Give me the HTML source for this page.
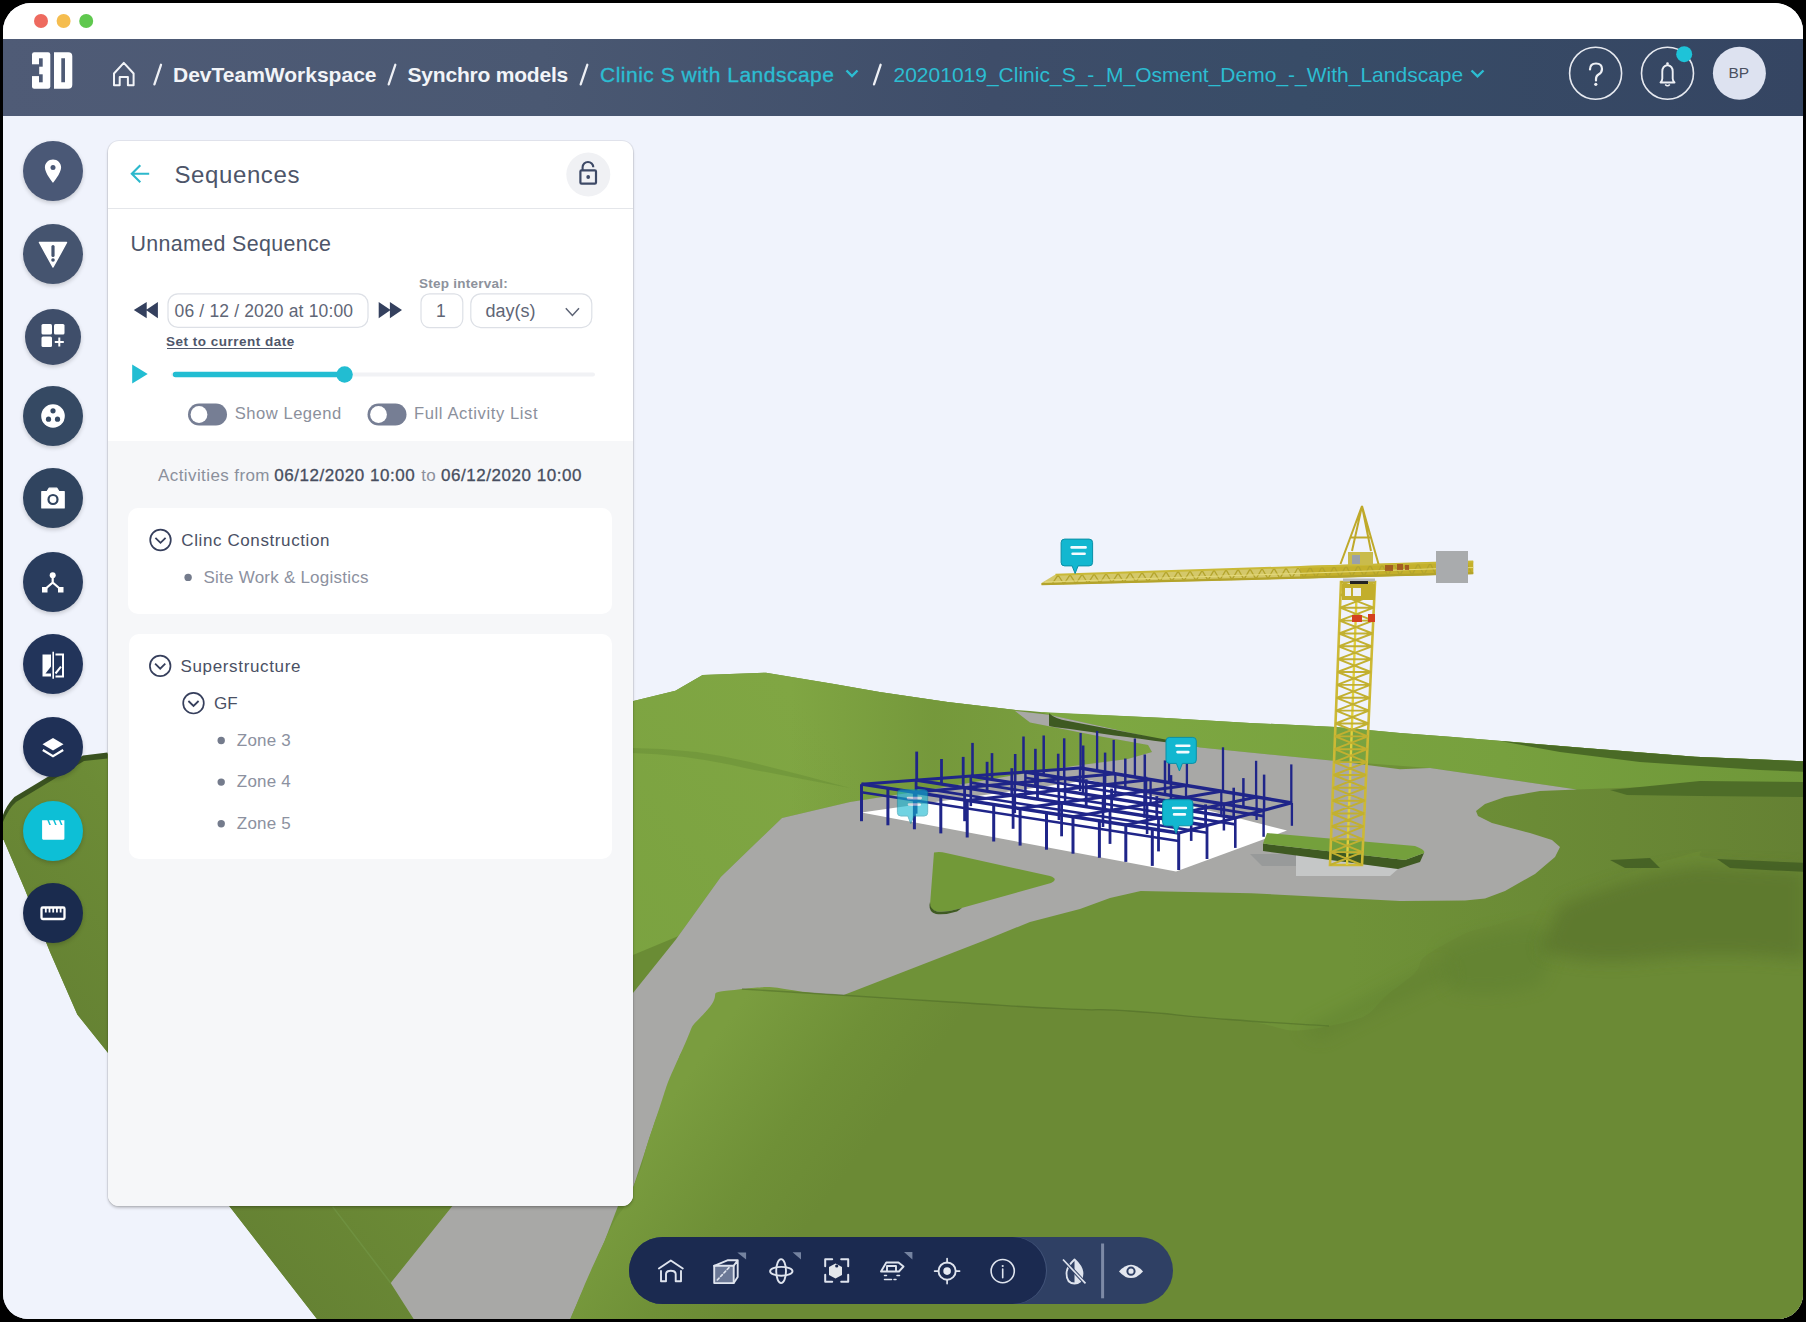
<!DOCTYPE html>
<html><head><meta charset="utf-8">
<style>
html,body{margin:0;padding:0;width:1806px;height:1322px;overflow:hidden;background:#000;}
*{box-sizing:border-box;}
.win{position:absolute;left:3px;top:3px;width:1800px;height:1316px;border-radius:28px 28px 25px 25px;overflow:hidden;background:#eef1f9;}
.in{position:absolute;left:-3px;top:-3px;width:1806px;height:1322px;font-family:"Liberation Sans",sans-serif;}
.abs{position:absolute;}
.t{position:absolute;white-space:pre;line-height:1;font-family:"Liberation Sans",sans-serif;}
.title{left:0;top:0;width:1806px;height:39px;background:#fff;}
.nav{left:0;top:39px;width:1806px;height:77px;background:linear-gradient(90deg,#4f5b76 0%,#4a5872 30%,#3e4d69 55%,#384c67 72%,#354562 100%);}
.btn{position:absolute;width:60px;height:60px;border-radius:50%;box-shadow:0 2px 4px rgba(0,0,0,0.18);}
.btn svg{position:absolute;left:0;top:0;}
.panel{left:108px;top:141px;width:525px;height:1065px;background:#fff;border-radius:11px;box-shadow:0 0 0 1px rgba(0,0,0,0.06),0 2px 3px rgba(0,0,0,0.22);overflow:hidden;}
.tb{left:629px;top:1237px;width:544px;height:67px;border-radius:34px;background:#2f4064;}
.tbd{left:629px;top:1237px;width:417px;height:67px;border-radius:34px;background:#1b2a50;}
</style></head>
<body>
<div class="win"><div class="in">

<!-- SCENE -->
<svg class="abs" style="left:0;top:0" width="1806" height="1322" viewBox="0 0 1806 1322">
<!--SC-->
<defs>
<linearGradient id="lh" gradientUnits="userSpaceOnUse" x1="800" y1="700" x2="150" y2="1250"><stop offset="0" stop-color="#80a643"/><stop offset="0.4" stop-color="#7aa240"/><stop offset="0.7" stop-color="#6c8b36"/><stop offset="1" stop-color="#627e32"/></linearGradient><linearGradient id="lhd" gradientUnits="userSpaceOnUse" x1="790" y1="0" x2="1150" y2="0"><stop offset="0" stop-color="#6f9137" stop-opacity="0"/><stop offset="0.4" stop-color="#6f9137" stop-opacity="0.65"/><stop offset="1" stop-color="#6f9137" stop-opacity="0.2"/></linearGradient>
<linearGradient id="fb" gradientUnits="userSpaceOnUse" x1="1050" y1="0" x2="1806" y2="0"><stop offset="0" stop-color="#7ea842"/><stop offset="0.6" stop-color="#77a03e"/><stop offset="1" stop-color="#6f9739"/></linearGradient>
<linearGradient id="fgg" gradientUnits="userSpaceOnUse" x1="750" y1="990" x2="900" y2="1100"><stop offset="0" stop-color="#7a9d3f"/><stop offset="0.6" stop-color="#6f9037"/><stop offset="1" stop-color="#6b8a35"/></linearGradient>
<filter id="bl8" x="-50%" y="-50%" width="200%" height="200%"><feGaussianBlur stdDeviation="8"/></filter>
<filter id="bl3" x="-50%" y="-50%" width="200%" height="200%"><feGaussianBlur stdDeviation="3"/></filter>
<linearGradient id="gb" gradientUnits="userSpaceOnUse" x1="1350" y1="0" x2="1806" y2="0"><stop offset="0" stop-color="#6f9238"/><stop offset="1" stop-color="#658133"/></linearGradient>
</defs>
<rect x="0" y="116" width="1806" height="1206" fill="#f0f3fc"/>
<path d="M3.7 840.0 L15.0 800.0 L50.0 777.4 L84.8 757.5 L107.3 753.7 L300.0 735.0 L500.0 712.0 L633.4 701.0 L675.4 690.8 L702.6 675.0 L766.0 672.7 L834.0 684.0 L879.6 692.0 L947.6 702.0 L1015.7 710.0 L1030.0 711.0 L1050.4 713.0 L1166.0 718.0 L1250.0 722.9 L1336.0 727.0 L1400.0 732.9 L1450.0 736.7 L1581.6 747.7 L1695.0 756.7 L1806.0 761.3 L1806.0 1322.0 L319.3 1322.0 L229.6 1206.6 L107.3 1052.0 L77.3 1014.5 L50.0 952.0 L25.0 889.7 L3.7 840.0Z" fill="url(#gb)"/>
<path d="M1040.0 712.0 L1166.0 718.0 L1250.0 722.9 L1336.0 727.0 L1400.0 732.9 L1450.0 736.7 L1581.6 747.7 L1695.0 756.7 L1806.0 761.3 L1806.0 790.0 L1700.0 785.0 L1577.0 789.6 L1430.0 768.0 L1336.0 761.0 L1200.0 747.6 L1166.0 740.8 L1049.0 714.7Z" fill="url(#fb)"/>
<path d="M1500 741 L1581.6 747.7 L1695 756.7 L1806 761.3 L1806 772 L1760 770 L1640 762 L1560 752Z" fill="#4a6a26"/>
<path d="M1610 790 L1700 781 L1806 782 L1806 797 L1700 796 L1627 795Z" fill="#4e6d28"/>
<path d="M0.0 823.0 L15.0 800.0 L50.0 777.4 L84.8 757.5 L107.3 753.7 L300.0 735.0 L500.0 712.0 L633.4 701.0 L675.4 690.8 L702.6 675.0 L766.0 672.7 L834.0 684.0 L879.6 692.0 L947.6 702.0 L1015.7 710.0 L1030.0 722.6 L1098.0 736.0 L1148.0 745.0 L1152.0 752.0 L1127.6 759.0 L1075.0 765.7 L1030.0 772.5 L940.0 788.0 L850.0 802.0 L782.0 818.0 L720.8 877.0 L675.5 940.0 L633.0 993.0 L452.0 1206.6 L390.7 1283.0 L415.6 1322.0 L319.3 1322.0 L229.6 1206.6 L107.3 1052.0 L77.3 1014.5 L50.0 952.0 L25.0 889.7 L3.7 840.0 L0.0 840.0Z" fill="url(#lh)"/>
<path d="M0.0 823.0 L15.0 800.0 L50.0 777.4 L84.8 757.5 L107.3 753.7 L300.0 735.0 L500.0 712.0 L633.4 701.0 L675.4 690.8 L702.6 675.0 L766.0 672.7 L834.0 684.0 L879.6 692.0 L947.6 702.0 L1015.7 710.0 L1030.0 722.6 L1098.0 736.0 L1148.0 745.0 L1152.0 752.0 L1127.6 759.0 L1075.0 765.7 L1030.0 772.5 L940.0 788.0 L850.0 802.0 L782.0 818.0 L720.8 877.0 L675.5 940.0 L633.0 993.0 L452.0 1206.6 L390.7 1283.0 L415.6 1322.0 L319.3 1322.0 L229.6 1206.6 L107.3 1052.0 L77.3 1014.5 L50.0 952.0 L25.0 889.7 L3.7 840.0 L0.0 840.0Z" fill="url(#lhd)"/>
<path d="M107.4 752.6 L83 755.6 L14.4 797 Q6 806 3 815 L3 822 Q9 808 16 802 L84 761 L107.4 758.5Z" fill="#3a5220"/>
<path d="M633 748 Q690 748 750 762 Q800 774 850 788 Q795 778 745 768 Q690 755 633 753Z" fill="#5f8430" opacity="0.35"/>
<path d="M633 955 L681 935 L633 993Z" fill="#6a8c35"/>
<path d="M1015.0 711.0 L1049.0 714.7 L1166.0 740.8 L1200.0 747.6 L1336.0 761.0 L1400.0 769.2 L1430.0 768.0 L1577.0 789.6 L1540.0 791.0 L1505.0 797.0 L1485.0 804.0 L1476.0 811.0 L1478.0 816.0 L1492.0 823.0 L1530.0 833.0 L1552.0 840.0 L1560.0 847.0 L1555.0 857.0 L1535.0 874.0 L1505.0 891.0 L1485.0 898.5 L1465.0 900.5 L1400.0 900.9 L1251.5 893.2 L1140.7 891.0 L1110.0 898.0 L1080.0 909.0 L1030.0 922.0 L985.6 940.0 L843.8 995.0 L742.0 989.0 L706.5 1011.0 L680.0 1055.0 L653.4 1126.0 L633.0 1188.0 L618.0 1206.0 L604.6 1241.0 L569.0 1322.0 L415.6 1322.0 L390.7 1283.0 L452.0 1206.6 L633.0 993.0 L675.5 940.0 L720.8 877.0 L782.0 818.0 L850.0 802.0 L940.0 788.0 L1030.0 772.5 L1075.0 765.7 L1127.6 759.0 L1152.0 752.0 L1148.0 745.0 L1098.0 736.0 L1030.0 722.6Z" fill="#a8a8a6"/>
<path d="M1049 713.3 Q1055 719 1068 721 Q1120 731 1168 740 L1168 742.5 Q1110 735 1070 729 Q1052 727 1049 725.7Z" fill="#3e5a22"/>
<path d="M569 1322 C580.9 1295.0 583.3 1285.7 604.6 1241.0 C625.9 1196.3 616.7 1226.3 633.0 1188.0 C649.3 1149.7 637.7 1170.3 653.4 1126.0 C669.1 1081.7 662.3 1093.3 680.0 1055.0 C697.7 1016.7 685.8 1033.0 706.5 1011.0 C727.2 989.0 697.8 994.3 742.0 989.0 C786.2 983.7 769.7 990.7 839.0 995.0 C908.3 999.3 876.0 997.4 950.0 1002.0 C1024.0 1006.6 1001.0 1005.7 1061.0 1008.7 C1121.0 1011.7 1074.0 1007.4 1130.0 1011.0 C1186.0 1014.6 1162.7 1014.5 1229.0 1019.5 C1295.3 1024.5 1272.0 1037.5 1329.0 1026.0 C1386.0 1014.5 1361.3 1012.3 1400.0 985.0 C1438.7 957.7 1399.7 968.7 1445.0 944.0 C1490.3 919.3 1460.3 939.3 1536.0 911.0 C1611.7 882.7 1611.4 876.3 1672.0 859.0 C1732.6 841.7 1673.0 857.7 1717.7 859.0 C1762.4 860.3 1776.6 861.7 1806.0 863.0 L1806 1322Z" fill="url(#fgg)"/>
<path d="M742 989 C774.3 991.0 769.7 990.7 839.0 995.0 C908.3 999.3 876.0 997.4 950.0 1002.0 C1024.0 1006.6 1001.0 1005.7 1061.0 1008.7 C1121.0 1011.7 1074.0 1007.4 1130.0 1011.0 C1186.0 1014.6 1162.7 1014.5 1229.0 1019.5 C1295.3 1024.5 1295.7 1023.8 1329.0 1026.0" fill="none" stroke="#4a6626" stroke-width="1.3" opacity="0.5"/>
<path d="M1440 950 Q1480 930 1540 925 Q1560 950 1540 985 Q1490 1000 1450 990Z" fill="#587a2d" opacity="0.35" filter="url(#bl8)"/>
<path d="M1300 1030 Q1360 1000 1440 960 L1455 975 Q1380 1010 1320 1040Z" fill="#5b7d2f" opacity="0.4" filter="url(#bl8)"/>
<path d="M1560 905 Q1640 872 1700 866 L1806 870 L1806 960 Q1720 950 1640 960 Q1580 965 1540 950Z" fill="#566f2c" opacity="0.6" filter="url(#bl8)"/>
<path d="M1717 859 L1806 863 L1806 872 L1730 868Z" fill="#3f5a22" opacity="0.8"/>
<path d="M1610 860 L1650 858 L1660 868 L1625 868Z" fill="#3f5a22" opacity="0.8"/>
<path d="M332.6 1206.6 L390.7 1283" stroke="#6f9140" stroke-width="1.5"/>
<path d="M934 852.5 Q940 851.5 946 853 L1050 876 Q1059 879 1051 883 L958 909 Q947 912.5 937 911.5 Q930 910 930 905Z" fill="#729938"/>
<path d="M930 902 Q930 910 937 911.5 Q947 912.5 958 909 L962 908 L957 911.5 Q946 915 936 914 Q929 912 929.5 905Z" fill="#3f5a22"/>
<path d="M861.5 812.5 L1176 871.5 L1287 830.6 L1090 780Z" fill="#ffffff"/>
<path d="M1250 854 L1302 854 L1300 866 L1262 866Z" fill="#989a9a"/>
<path d="M1296 854 L1398 869 L1390 876 L1296 876Z" fill="#c5c7c7"/>
<path d="M1263 843.6 L1405 860 L1424 853 L1420 862 L1398 869 L1263 851Z" fill="#3f5a22"/>
<path d="M1267 833 L1415 846 Q1426 850 1424 853 L1405 860 L1263 843.6Z" fill="#74a03c"/>
<g stroke-linecap="butt"><path d="M1080.0 768.0 V791.0" stroke="#1f2589" stroke-width="2.3"/><path d="M1080.6 768.0 V733.0" stroke="#1f2589" stroke-width="2.3"/><path d="M1097.1 770.9 V730.9" stroke="#1f2589" stroke-width="2.3"/><path d="M1025.4 772.0 V798.5" stroke="#1f2589" stroke-width="2.5"/><path d="M1023.5 772.0 V736.5" stroke="#1f2589" stroke-width="2.5"/><path d="M1115.3 773.8 V796.8" stroke="#1f2589" stroke-width="2.3"/><path d="M1113.7 773.8 V739.9" stroke="#1f2589" stroke-width="2.3"/><path d="M1043.7 775.2 V735.5" stroke="#1f2589" stroke-width="2.5"/><path d="M970.8 776.1 V806.1" stroke="#1f2589" stroke-width="2.6"/><path d="M972.5 776.1 V742.9" stroke="#1f2589" stroke-width="2.6"/><path d="M1134.9 776.7 V738.5" stroke="#1f2589" stroke-width="2.3"/><path d="M1065.1 778.4 V804.9" stroke="#1f2589" stroke-width="2.5"/><path d="M1064.2 778.4 V738.3" stroke="#1f2589" stroke-width="2.5"/><path d="M992.0 779.6 V753.1" stroke="#1f2589" stroke-width="2.6"/><path d="M1150.6 779.6 V802.6" stroke="#1f2589" stroke-width="2.3"/><path d="M916.1 780.2 V813.7" stroke="#1f2589" stroke-width="2.8"/><path d="M916.7 780.2 V751.6" stroke="#1f2589" stroke-width="2.8"/><path d="M1083.2 781.6 V745.5" stroke="#1f2589" stroke-width="2.5"/><path d="M1169.0 782.5 V746.8" stroke="#1f2589" stroke-width="2.3"/><path d="M1014.8 783.1 V813.1" stroke="#1f2589" stroke-width="2.6"/><path d="M1015.2 783.1 V754.0" stroke="#1f2589" stroke-width="2.6"/><path d="M941.5 783.9 V759.0" stroke="#1f2589" stroke-width="2.8"/><path d="M861.5 784.2 V821.2" stroke="#1f2589" stroke-width="3.0"/><path d="M1104.8 784.8 V811.3" stroke="#1f2589" stroke-width="2.5"/><path d="M1105.1 784.8 V752.6" stroke="#1f2589" stroke-width="2.5"/><path d="M1186.0 785.4 V808.4" stroke="#1f2589" stroke-width="2.3"/><path d="M1186.9 785.4 V741.0" stroke="#1f2589" stroke-width="2.3"/><path d="M1035.4 786.5 V748.8" stroke="#1f2589" stroke-width="2.6"/><path d="M964.6 787.7 V821.2" stroke="#1f2589" stroke-width="2.8"/><path d="M963.2 787.7 V756.9" stroke="#1f2589" stroke-width="2.8"/><path d="M1125.3 788.0 V758.5" stroke="#1f2589" stroke-width="2.5"/><path d="M887.9 788.3 V825.3" stroke="#1f2589" stroke-width="3.0"/><path d="M1058.9 790.0 V820.0" stroke="#1f2589" stroke-width="2.6"/><path d="M1058.2 790.0 V753.7" stroke="#1f2589" stroke-width="2.6"/><path d="M1144.5 791.2 V817.7" stroke="#1f2589" stroke-width="2.5"/><path d="M1144.8 791.2 V754.5" stroke="#1f2589" stroke-width="2.5"/><path d="M1221.3 791.2 V814.2" stroke="#1f2589" stroke-width="2.3"/><path d="M1223.0 791.2 V747.3" stroke="#1f2589" stroke-width="2.3"/><path d="M987.1 791.5 V761.8" stroke="#1f2589" stroke-width="2.8"/><path d="M914.4 792.3 V829.3" stroke="#1f2589" stroke-width="3.0"/><path d="M1083.0 793.5 V760.1" stroke="#1f2589" stroke-width="2.6"/><path d="M1165.0 794.4 V760.4" stroke="#1f2589" stroke-width="2.5"/><path d="M1013.1 795.3 V828.8" stroke="#1f2589" stroke-width="2.8"/><path d="M1011.8 795.3 V768.2" stroke="#1f2589" stroke-width="2.8"/><path d="M940.8 796.4 V833.4" stroke="#1f2589" stroke-width="3.0"/><path d="M1103.0 797.0 V827.0" stroke="#1f2589" stroke-width="2.6"/><path d="M1104.1 797.0 V771.2" stroke="#1f2589" stroke-width="2.6"/><path d="M1256.6 797.0 V820.0" stroke="#1f2589" stroke-width="2.3"/><path d="M1256.1 797.0 V760.8" stroke="#1f2589" stroke-width="2.3"/><path d="M1184.2 797.6 V824.1" stroke="#1f2589" stroke-width="2.5"/><path d="M1037.5 799.0 V772.2" stroke="#1f2589" stroke-width="2.8"/><path d="M967.2 800.5 V837.5" stroke="#1f2589" stroke-width="3.0"/><path d="M1291.9 802.8 V825.8" stroke="#1f2589" stroke-width="2.3"/><path d="M1291.3 802.8 V764.4" stroke="#1f2589" stroke-width="2.3"/><path d="M1061.6 802.8 V836.3" stroke="#1f2589" stroke-width="2.8"/><path d="M1223.9 804.0 V830.5" stroke="#1f2589" stroke-width="2.5"/><path d="M1147.1 804.0 V834.0" stroke="#1f2589" stroke-width="2.6"/><path d="M1146.0 804.0 V776.7" stroke="#1f2589" stroke-width="2.6"/><path d="M993.7 804.5 V841.5" stroke="#1f2589" stroke-width="3.0"/><path d="M1086.2 806.6 V779.3" stroke="#1f2589" stroke-width="2.8"/><path d="M1243.4 807.2 V778.1" stroke="#1f2589" stroke-width="2.5"/><path d="M1171.0 807.5 V775.1" stroke="#1f2589" stroke-width="2.6"/><path d="M1020.1 808.6 V845.6" stroke="#1f2589" stroke-width="3.0"/><path d="M1263.6 810.3 V836.8" stroke="#1f2589" stroke-width="2.5"/><path d="M1264.1 810.3 V774.6" stroke="#1f2589" stroke-width="2.5"/><path d="M1110.0 810.4 V843.9" stroke="#1f2589" stroke-width="2.8"/><path d="M1111.6 810.4 V788.6" stroke="#1f2589" stroke-width="2.8"/><path d="M1191.2 810.9 V840.9" stroke="#1f2589" stroke-width="2.6"/><path d="M1046.5 812.7 V849.7" stroke="#1f2589" stroke-width="3.0"/><path d="M1073.0 816.7 V853.7" stroke="#1f2589" stroke-width="3.0"/><path d="M1235.3 817.9 V847.9" stroke="#1f2589" stroke-width="2.6"/><path d="M1233.7 817.9 V787.7" stroke="#1f2589" stroke-width="2.6"/><path d="M1158.5 817.9 V851.4" stroke="#1f2589" stroke-width="2.8"/><path d="M1156.8 817.9 V796.1" stroke="#1f2589" stroke-width="2.8"/><path d="M1099.4 820.8 V857.8" stroke="#1f2589" stroke-width="3.0"/><path d="M1182.1 821.7 V798.6" stroke="#1f2589" stroke-width="2.8"/><path d="M1125.8 824.9 V861.9" stroke="#1f2589" stroke-width="3.0"/><path d="M1207.0 825.5 V859.0" stroke="#1f2589" stroke-width="2.8"/><path d="M1205.6 825.5 V804.4" stroke="#1f2589" stroke-width="2.8"/><path d="M1152.3 828.9 V865.9" stroke="#1f2589" stroke-width="3.0"/><path d="M1178.7 833.0 V870.0" stroke="#1f2589" stroke-width="3.0"/><path d="M861.5 784.2 L1178.7 833.0" stroke="#1f2589" stroke-width="3.3"/><path d="M861.5 792.2 L1178.7 841.0" stroke="#1f2589" stroke-width="2.6"/><path d="M916.1 780.2 L1207.0 825.5" stroke="#1f2589" stroke-width="3.3"/><path d="M916.1 787.4 L1207.0 832.7" stroke="#1f2589" stroke-width="2.6"/><path d="M970.8 776.1 L1235.3 817.9" stroke="#1f2589" stroke-width="3.3"/><path d="M970.8 782.6 L1235.3 824.4" stroke="#1f2589" stroke-width="2.6"/><path d="M1025.4 772.0 L1263.6 810.3" stroke="#1f2589" stroke-width="3.3"/><path d="M1025.4 777.8 L1263.6 816.1" stroke="#1f2589" stroke-width="2.6"/><path d="M1080.0 768.0 L1291.9 802.8" stroke="#1f2589" stroke-width="3.3"/><path d="M861.5 784.2 L1080.0 768.0" stroke="#1f2589" stroke-width="3"/><path d="M914.4 792.3 L1115.3 773.8" stroke="#1f2589" stroke-width="3"/><path d="M967.2 800.5 L1150.6 779.6" stroke="#1f2589" stroke-width="3"/><path d="M1020.1 808.6 L1186.0 785.4" stroke="#1f2589" stroke-width="3"/><path d="M1073.0 816.7 L1221.3 791.2" stroke="#1f2589" stroke-width="3"/><path d="M1125.8 824.9 L1256.6 797.0" stroke="#1f2589" stroke-width="3"/><path d="M1178.7 833.0 L1291.9 802.8" stroke="#1f2589" stroke-width="3"/></g>
<path d="M1341 582 L1375 582 L1362 865 L1330 865Z" fill="none" stroke="#cdb935" stroke-width="2.6"/>
<path d="M1357 582 L1347 865" stroke="#e0cf3c" stroke-width="2.4"/>
<path d="M1341.0 582.0 L1374.4 594.9 M1375.0 582.0 L1340.5 594.9 M1341.0 582.0 L1375.0 582.0 M1340.5 594.9 L1373.8 607.7 M1374.4 594.9 L1340.0 607.7 M1340.5 594.9 L1374.4 594.9 M1340.0 607.7 L1373.2 620.6 M1373.8 607.7 L1339.5 620.6 M1340.0 607.7 L1373.8 607.7 M1339.5 620.6 L1372.6 633.5 M1373.2 620.6 L1339.0 633.5 M1339.5 620.6 L1373.2 620.6 M1339.0 633.5 L1372.0 646.3 M1372.6 633.5 L1338.5 646.3 M1339.0 633.5 L1372.6 633.5 M1338.5 646.3 L1371.5 659.2 M1372.0 646.3 L1338.0 659.2 M1338.5 646.3 L1372.0 646.3 M1338.0 659.2 L1370.9 672.0 M1371.5 659.2 L1337.5 672.0 M1338.0 659.2 L1371.5 659.2 M1337.5 672.0 L1370.3 684.9 M1370.9 672.0 L1337.0 684.9 M1337.5 672.0 L1370.9 672.0 M1337.0 684.9 L1369.7 697.8 M1370.3 684.9 L1336.5 697.8 M1337.0 684.9 L1370.3 684.9 M1336.5 697.8 L1369.1 710.6 M1369.7 697.8 L1336.0 710.6 M1336.5 697.8 L1369.7 697.8 M1336.0 710.6 L1368.5 723.5 M1369.1 710.6 L1335.5 723.5 M1336.0 710.6 L1369.1 710.6 M1335.5 723.5 L1367.9 736.4 M1368.5 723.5 L1335.0 736.4 M1335.5 723.5 L1368.5 723.5 M1335.0 736.4 L1367.3 749.2 M1367.9 736.4 L1334.5 749.2 M1335.0 736.4 L1367.9 736.4 M1334.5 749.2 L1366.7 762.1 M1367.3 749.2 L1334.0 762.1 M1334.5 749.2 L1367.3 749.2 M1334.0 762.1 L1366.1 775.0 M1366.7 762.1 L1333.5 775.0 M1334.0 762.1 L1366.7 762.1 M1333.5 775.0 L1365.5 787.8 M1366.1 775.0 L1333.0 787.8 M1333.5 775.0 L1366.1 775.0 M1333.0 787.8 L1365.0 800.7 M1365.5 787.8 L1332.5 800.7 M1333.0 787.8 L1365.5 787.8 M1332.5 800.7 L1364.4 813.5 M1365.0 800.7 L1332.0 813.5 M1332.5 800.7 L1365.0 800.7 M1332.0 813.5 L1363.8 826.4 M1364.4 813.5 L1331.5 826.4 M1332.0 813.5 L1364.4 813.5 M1331.5 826.4 L1363.2 839.3 M1363.8 826.4 L1331.0 839.3 M1331.5 826.4 L1363.8 826.4 M1331.0 839.3 L1362.6 852.1 M1363.2 839.3 L1330.5 852.1 M1331.0 839.3 L1363.2 839.3 M1330.5 852.1 L1362.0 865.0 M1362.6 852.1 L1330.0 865.0 M1330.5 852.1 L1362.6 852.1" stroke="#c2b030" stroke-width="1.9" fill="none"/>
<path d="M1352 615 h10 v7 h-10z M1368 614 h7 v8 h-7z" fill="#d5401f"/>
<path d="M1041.5 582.9 L1055.5 574.6 L1473.2 561.2 L1473.2 574 L1041.5 585Z" fill="#cdbd45" opacity="0.8"/>
<path d="M1300 566 L1473.2 561.2 L1473.2 574 L1300 578.5Z" fill="#c4b02c"/>
<path d="M1052.0 584.2 L1058.0 575.2 M1058.0 575.0 L1064.0 584.1 M1064.0 583.9 L1070.0 574.8 M1070.0 574.6 L1076.0 583.8 M1076.0 583.6 L1082.0 574.4 M1082.0 574.2 L1088.0 583.5 M1088.0 583.3 L1094.0 574.1 M1094.0 573.9 L1100.0 583.2 M1100.0 583.0 L1106.0 573.7 M1106.0 573.5 L1112.0 582.9 M1112.0 582.7 L1118.0 573.3 M1118.0 573.1 L1124.0 582.6 M1124.0 582.4 L1130.0 572.9 M1130.0 572.7 L1136.0 582.2 M1136.0 582.1 L1142.0 572.5 M1142.0 572.3 L1148.0 581.9 M1148.0 581.8 L1154.0 572.1 M1154.0 571.9 L1160.0 581.6 M1160.0 581.5 L1166.0 571.7 M1166.0 571.6 L1172.0 581.3 M1172.0 581.2 L1178.0 571.4 M1178.0 571.2 L1184.0 581.0 M1184.0 580.9 L1190.0 571.0 M1190.0 570.8 L1196.0 580.7 M1196.0 580.6 L1202.0 570.6 M1202.0 570.4 L1208.0 580.4 M1208.0 580.3 L1214.0 570.2 M1214.0 570.0 L1220.0 580.1 M1220.0 580.0 L1226.0 569.8 M1226.0 569.6 L1232.0 579.8 M1232.0 579.6 L1238.0 569.4 M1238.0 569.2 L1244.0 579.5 M1244.0 579.3 L1250.0 569.1 M1250.0 568.9 L1256.0 579.2 M1256.0 579.0 L1262.0 568.7 M1262.0 568.5 L1268.0 578.9 M1268.0 578.7 L1274.0 568.3 M1274.0 568.1 L1280.0 578.6 M1280.0 578.4 L1286.0 567.9 M1286.0 567.7 L1292.0 578.3 M1292.0 578.1 L1298.0 567.5 M1298.0 567.3 L1304.0 578.0 M1304.0 577.8 L1310.0 567.1 M1310.0 566.9 L1316.0 577.7 M1316.0 577.5 L1322.0 566.7 M1322.0 566.6 L1328.0 577.4 M1328.0 577.2 L1334.0 566.4 M1334.0 566.2 L1340.0 577.0 M1340.0 576.9 L1346.0 566.0 M1346.0 565.8 L1352.0 576.7 M1352.0 576.6 L1358.0 565.6 M1358.0 565.4 L1364.0 576.4 M1364.0 576.3 L1370.0 565.2 M1370.0 565.0 L1376.0 576.1 M1376.0 576.0 L1382.0 564.8 M1382.0 564.6 L1388.0 575.8 M1388.0 575.7 L1394.0 564.4 M1394.0 564.2 L1400.0 575.5 M1400.0 575.4 L1406.0 564.0 M1406.0 563.9 L1412.0 575.2 M1412.0 575.1 L1418.0 563.7 M1418.0 563.5 L1424.0 574.9 M1424.0 574.8 L1430.0 563.3 M1430.0 563.1 L1436.0 574.6 M1436.0 574.4 L1442.0 562.9 M1442.0 562.7 L1448.0 574.3 M1448.0 574.1 L1454.0 562.5 M1454.0 562.3 L1460.0 574.0 M1460.0 573.8 L1466.0 562.1 M1466.0 561.9 L1472.0 573.7" stroke="#b3a42c" stroke-width="1.3" fill="none"/>
<path d="M1055.5 574.8 L1473.2 561.4" stroke="#c9b937" stroke-width="2"/>
<path d="M1041.5 584.2 L1473.2 573.2" stroke="#b3a32b" stroke-width="2.2"/>
<path d="M1045 582 L1473.2 567.5" stroke="#e5da7a" stroke-width="1"/>
<rect x="1436" y="551" width="32" height="32" fill="#a9abad"/>
<path d="M1343 578.5 h32 v3 h-32z" fill="#b8babb"/><path d="M1350 581 h18 v3 h-18z" fill="#222"/><path d="M1342 584 h33 v16 h-33z" fill="#c2ae2c"/><path d="M1345 588 h6 v8 h-6z M1353 588 h8 v8 h-8z" fill="#eef0f0"/>
<path d="M1362 506 L1340.5 564 M1362 506 L1378.5 564 M1362 506 L1352 551 M1362 506 L1371 551 M1350 537.5 h21" stroke="#bfa92a" stroke-width="2" fill="none"/>
<path d="M1385 565 h8 v6 h-8z M1397 564 h6 v6 h-6z M1405 565 h4 v5 h-4z" fill="#9c4a1e" opacity="0.8"/>
<path d="M1348 552 h25 v13 h-25z" fill="#c9bb4c"/><path d="M1352 555 h8 v9 h-8z" fill="#9aa0a8"/>
<g opacity="1.00"><path d="M1068.1 539.1 h21.0 q3.5 0 3.5 3.5 v19.8 q0 3.5 -3.5 3.5 h-11.0 l-3 7.6 l-3 -7.6 h-7.5 q-3.5 0 -3.5 -3.5 v-19.8 q0 -3.5 3.5 -3.5z" fill="#12b7d0" stroke="#0b8fa6" stroke-width="1"/><path d="M1071.6 547.4 h14.0 M1072.6 553.8 h12.0" stroke="#f4fbff" stroke-width="2.6" stroke-linecap="round"/></g>
<g opacity="1.00"><path d="M1173.0 737.4 h19.8 q3.5 0 3.5 3.5 v19.0 q0 3.5 -3.5 3.5 h-10.4 l-3 7.6 l-3 -7.6 h-6.9 q-3.5 0 -3.5 -3.5 v-19.0 q0 -3.5 3.5 -3.5z" fill="#12b7d0" stroke="#0b8fa6" stroke-width="1"/><path d="M1176.5 745.7 h12.8 M1177.5 752.1 h10.8" stroke="#f4fbff" stroke-width="2.6" stroke-linecap="round"/></g>
<g opacity="1.00"><path d="M1169.6 799.7 h19.8 q3.5 0 3.5 3.5 v19.1 q0 3.5 -3.5 3.5 h-10.4 l-3 7.6 l-3 -7.6 h-6.9 q-3.5 0 -3.5 -3.5 v-19.1 q0 -3.5 3.5 -3.5z" fill="#12b7d0" stroke="#0b8fa6" stroke-width="1"/><path d="M1173.1 808.0 h12.8 M1174.1 814.4 h10.8" stroke="#f4fbff" stroke-width="2.6" stroke-linecap="round"/></g>
<g opacity="0.60"><path d="M904.5 789.8 h19.7 q3.5 0 3.5 3.5 v19.2 q0 3.5 -3.5 3.5 h-10.4 l-3 7.6 l-3 -7.6 h-6.9 q-3.5 0 -3.5 -3.5 v-19.2 q0 -3.5 3.5 -3.5z" fill="#12b7d0" stroke="#0b8fa6" stroke-width="1"/><path d="M908.0 798.1 h12.7 M909.0 804.5 h10.7" stroke="#f4fbff" stroke-width="2.6" stroke-linecap="round"/></g>
<!--/SC-->
</svg>

<!-- title bar -->
<div class="abs title"></div>
<svg class="abs" style="left:0;top:0" width="120" height="39">
<circle cx="41" cy="21" r="7" fill="#ee6a5f"/>
<circle cx="63.6" cy="21" r="7" fill="#f5bd4f"/>
<circle cx="86.2" cy="21" r="7" fill="#5fc84e"/>
</svg>

<!-- nav -->
<div class="abs nav"></div>
<svg class="abs" style="left:0;top:39px" width="200" height="77" viewBox="0 39 200 77">
<rect x="32" y="52.3" width="18.3" height="36.4" rx="2.2" fill="#fff"/>
<rect x="31" y="64.3" width="8.2" height="11.8" fill="#4e5a75"/>
<rect x="39" y="58.3" width="3.7" height="8.4" fill="#4e5a75"/>
<rect x="39" y="74.3" width="3.7" height="8" fill="#4e5a75"/>
<path fill="#fff" fill-rule="evenodd" d="M54 52.3h14.3q4 0 4 4v28.4q0 4-4 4H54z M61.3 58.3v24h3.7v-24z"/>
<path fill="none" stroke="#f2f4f8" stroke-width="2" stroke-linejoin="round" d="M114 73.5l9.8-10.6l9.8 10.6v11.7h-5.7v-8.2h-8.2v8.2H114z"/>
</svg>
<svg class="abs" style="left:0;top:39px" width="1806" height="77" viewBox="0 39 1806 77"><path d="M154.4 84.3L161.0 64.8" stroke="#eef0f5" stroke-width="2.3" stroke-linecap="round"/><path d="M388.7 84.3L395.3 64.8" stroke="#eef0f5" stroke-width="2.3" stroke-linecap="round"/><path d="M580.7 84.3L587.3 64.8" stroke="#eef0f5" stroke-width="2.3" stroke-linecap="round"/><path d="M874.0 84.3L880.6 64.8" stroke="#eef0f5" stroke-width="2.3" stroke-linecap="round"/></svg>
<div class="t" style="left:173px;top:63.7px;font-size:21px;font-weight:bold;color:#f2f4f8;">DevTeamWorkspace</div>
<div class="t" style="left:407.5px;top:63.7px;font-size:21px;font-weight:bold;color:#f2f4f8;letter-spacing:-0.2px">Synchro models</div>
<div class="t" style="left:600px;top:63.7px;font-size:21px;color:#2cbdd2;letter-spacing:0.5px;-webkit-text-stroke:0.35px #2cbdd2">Clinic S with Landscape</div>
<svg class="abs" style="left:840px;top:60px" width="25" height="25"><path d="M6.5 10.5l5.5 5.5l5.5-5.5" fill="none" stroke="#2cbdd2" stroke-width="2.4"/></svg>
<div class="t" style="left:893.5px;top:63.7px;font-size:21px;color:#2cbdd2;">20201019_Clinic_S_-_M_Osment_Demo_-_With_Landscape</div>
<svg class="abs" style="left:1466px;top:60px" width="25" height="25"><path d="M5.5 10.5l6 5.8l6-5.8" fill="none" stroke="#2cbdd2" stroke-width="2.4"/></svg>

<svg class="abs" style="left:1560px;top:39px" width="246" height="77" viewBox="1560 39 246 77">
<circle cx="1595.6" cy="73.2" r="26" fill="none" stroke="#e6e9f0" stroke-width="1.6"/>
<path d="M1590 69.5q0-6 6-6q6 0 6 5.5q0 3.5-3.5 5.5q-2.5 1.5-2.5 4.5v1.5" fill="none" stroke="#eef0f5" stroke-width="2.2" stroke-linecap="round"/>
<circle cx="1595.8" cy="84.3" r="1.6" fill="#eef0f5"/>
<circle cx="1667.5" cy="73.2" r="26" fill="none" stroke="#e6e9f0" stroke-width="1.6"/>
<path d="M1660.5 82.5h14q-1.8-1.5-1.8-4v-7q0-5.5-5.2-6.5q-5.2 1-5.2 6.5v7q0 2.5-1.8 4z" fill="none" stroke="#eef0f5" stroke-width="1.9" stroke-linejoin="round"/>
<path d="M1665.2 84.5q2.3 2.5 4.6 0" fill="none" stroke="#eef0f5" stroke-width="1.6"/>
<circle cx="1667.5" cy="63.5" r="1.3" fill="#eef0f5"/>
<circle cx="1684.2" cy="54.2" r="8" fill="#1ec3d8"/>
<circle cx="1739.4" cy="73.2" r="26.5" fill="#dde2f0"/>
</svg>
<div class="t" style="left:1728.5px;top:65px;font-size:15.5px;color:#4a5060;">BP</div>

<!-- sidebar -->
<div class="btn" style="left:22.6px;top:141.2px;background:#4a5876"><svg width="60" height="60"><path d="M30 18.4c-4.5 0-8.1 3.5-8.1 8c0 5.8 8.1 15.4 8.1 15.4s8.1-9.6 8.1-15.4c0-4.5-3.6-8-8.1-8z" fill="#fff"/><circle cx="30" cy="26.6" r="2.5" fill="#4a5876"/></svg></div>
<div class="btn" style="left:22.6px;top:224px;background:#45546f"><svg width="60" height="60"><path d="M16.5 18.5h27l-13.5 24.5z" fill="#fff" stroke="#fff" stroke-width="1.5" stroke-linejoin="round"/><path d="M30 22.5v9" stroke="#45546f" stroke-width="3.2" stroke-linecap="round"/><circle cx="30" cy="36" r="1.8" fill="#45546f"/></svg></div>
<div class="btn" style="left:24.6px;top:308.5px;width:56px;height:56px;background:#3f4e6a"><svg width="56" height="56"><rect x="16.5" y="15" width="10.5" height="10.5" rx="1.5" fill="#fff"/><rect x="29" y="15" width="10.5" height="10.5" rx="1.5" fill="#fff"/><rect x="16.5" y="27.5" width="10.5" height="10.5" rx="1.5" fill="#fff"/><path d="M34.3 28.5v9M29.8 33h9" stroke="#fff" stroke-width="2"/></svg></div>
<div class="btn" style="left:22.6px;top:386.4px;background:#354963"><svg width="60" height="60"><circle cx="30" cy="30" r="11.8" fill="#fff"/><circle cx="30" cy="24.8" r="2.6" fill="#354963"/><circle cx="25.5" cy="33.2" r="2.6" fill="#354963"/><circle cx="34.5" cy="33.2" r="2.6" fill="#354963"/></svg></div>
<div class="btn" style="left:22.6px;top:468.2px;background:#30445f"><svg width="60" height="60"><path d="M18.8 23.5h5.2l2.2-3.3h7.6l2.2 3.3h5.2v16.5H18.8z" fill="#fff" stroke="#fff" stroke-linejoin="round" stroke-width="1.2"/><circle cx="30" cy="31.5" r="4.5" fill="none" stroke="#30445f" stroke-width="2.2"/></svg></div>
<div class="btn" style="left:22.6px;top:551.5px;background:#293c5d"><svg width="60" height="60"><circle cx="29.7" cy="23.2" r="3" fill="#fff"/><path d="M29.7 24v6.5l-7.5 6.5M29.7 30.5l7.5 6.5" stroke="#fff" stroke-width="2.2" fill="none"/><rect x="19" y="35" width="5.5" height="5.5" fill="#fff"/><rect x="35" y="35" width="5.5" height="5.5" fill="#fff"/></svg></div>
<div class="btn" style="left:22.6px;top:634px;background:#22345a"><svg width="60" height="60"><path d="M19.5 20.5h8.5v22h-8.5z" fill="#fff"/><path d="M28 32.5l-5.5 7h5.5z" fill="#22345a"/><path d="M30.2 17.8v27" stroke="#fff" stroke-width="1.6"/><path d="M32.5 20.5h7.5v22h-7.5" fill="none" stroke="#fff" stroke-width="2"/><path d="M32.5 39.5l5.5-6.8" stroke="#fff" stroke-width="2"/></svg></div>
<div class="btn" style="left:22.6px;top:716.5px;background:#1f3056"><svg width="60" height="60"><path d="M30 21l10.5 6.3l-10.5 6.3l-10.5-6.3z" fill="#fff"/><path d="M19.8 33l10.2 6.2l10.2-6.2" fill="none" stroke="#fff" stroke-width="2.2"/></svg></div>
<div class="btn" style="left:22.6px;top:800.9px;background:#0dbfd6"><svg width="60" height="60"><path d="M19.1 24.1H41.4V37.6Q41.4 38.7 40.3 38.7H20.2Q19.1 38.7 19.1 37.6Z M19.1 19.3H24.3L26.3 24.1H19.1Z M25.9 19.3H30.1L32.1 24.1H27.9Z M31.7 19.3H35.9L37.9 24.1H33.7Z M37.5 19.3H41.4V24.1H39.5Z" fill="#fff"/></svg></div>
<div class="btn" style="left:22.6px;top:883.4px;background:#1a2b4e"><svg width="60" height="60"><rect x="18.5" y="24.5" width="23" height="11.5" rx="1.3" fill="none" stroke="#fff" stroke-width="2.3"/><path d="M22.8 25v4.5M26.5 25v4.5M30.2 25v4.5M33.9 25v4.5M37.6 25v4.5" stroke="#fff" stroke-width="1.8"/></svg></div>

<!-- PANEL -->
<div class="abs panel">
<div class="abs" style="left:0;top:66.6px;width:525px;height:1.6px;background:#e4e6ea"></div>
<svg class="abs" style="left:0;top:0" width="525" height="300" viewBox="108 141 525 300">
<path d="M131.8 173.7H149.2M140.3 165.2l-8.5 8.5l8.5 8.5" fill="none" stroke="#2cb8cc" stroke-width="2.1"/>
<circle cx="588.3" cy="174.5" r="22" fill="#f0f1f4"/>
<rect x="580.4" y="170.4" width="15.6" height="13.2" rx="1.2" fill="none" stroke="#3d4966" stroke-width="2.2"/>
<path d="M582.6 170.2V167.3a5.35 5.35 0 0 1 10.7 0" fill="none" stroke="#3d4966" stroke-width="2.1"/>
<circle cx="588.2" cy="177" r="1.9" fill="#3d4966"/>
<path d="M133.8 310.1L146.7 302V318.2Z M146 310.1L157.9 302V318.2Z" fill="#34405e"/>
<path d="M378.7 302V318.2L390.6 310.1Z M389.9 302V318.2L402 310.1Z" fill="#34405e"/>
<rect x="168" y="293.8" width="200" height="33.6" rx="10" fill="none" stroke="#dde0e6" stroke-width="1.2"/>
<rect x="421" y="293.8" width="41.8" height="33.8" rx="8.5" fill="none" stroke="#dde0e6" stroke-width="1.2"/>
<rect x="470.8" y="293.8" width="121" height="33.8" rx="10" fill="none" stroke="#dde0e6" stroke-width="1.2"/>
<path d="M565.8 308.2l6.6 7.2l6.6-7.2" fill="none" stroke="#5c6375" stroke-width="1.5"/>
<path d="M132.2 364.5L147.7 374L132.2 383.5Z" fill="#22bdd2"/>
<line x1="173" y1="374.5" x2="593" y2="374.5" stroke="#f1f2f5" stroke-width="4" stroke-linecap="round"/>
<line x1="175.5" y1="374.5" x2="344" y2="374.5" stroke="#22bdd2" stroke-width="5.4" stroke-linecap="round"/>
<circle cx="344.6" cy="374.5" r="8.2" fill="#22bdd2"/>
<rect x="188" y="403.5" width="39" height="22" rx="11" fill="#767e94"/>
<circle cx="199" cy="414.5" r="8.4" fill="#fff"/>
<rect x="367.5" y="403.5" width="39" height="22" rx="11" fill="#767e94"/>
<circle cx="378.5" cy="414.5" r="8.4" fill="#fff"/>
</svg>
<div class="t" style="left:66.5px;top:21.6px;font-size:24px;color:#4d5569;letter-spacing:0.6px">Sequences</div>
<div class="t" style="left:22.5px;top:92.6px;font-size:21.4px;color:#4d5569;letter-spacing:0.36px">Unnamed Sequence</div>
<div class="t" style="left:66.6px;top:162px;font-size:17.5px;color:#5f6676;letter-spacing:0.15px">06 / 12 / 2020 at 10:00</div>
<div class="t" style="left:311px;top:136.4px;font-size:13.5px;font-weight:bold;color:#8d929c;letter-spacing:0.25px">Step interval:</div>
<div class="t" style="left:328px;top:161.8px;font-size:17.5px;color:#5f6676;">1</div>
<div class="t" style="left:377.4px;top:161.4px;font-size:18px;color:#5f6676;">day(s)</div>
<div class="t" style="left:58px;top:194.3px;font-size:13.5px;font-weight:bold;color:#4f576b;letter-spacing:0.5px">Set to current date</div>
<div class="abs" style="left:58.5px;top:206.8px;width:125.5px;height:1.6px;background:#4f576b"></div>
<div class="t" style="left:126.8px;top:264.85px;font-size:16.6px;color:#8b909c;letter-spacing:0.5px">Show Legend</div>
<div class="t" style="left:306px;top:264.85px;font-size:16.6px;color:#8b909c;letter-spacing:0.6px">Full Activity List</div>

<div class="abs" style="left:0;top:300px;width:525px;height:765px;background:#f6f7f9"></div>
<div class="t" style="left:50px;top:325.6px;font-size:17px;color:#8b909c;letter-spacing:0.41px">Activities from</div>
<div class="t" style="left:166.2px;top:325.6px;font-size:17px;color:#474e5f;letter-spacing:0.55px;-webkit-text-stroke:0.3px #474e5f">06/12/2020 10:00</div>
<div class="t" style="left:313.2px;top:325.6px;font-size:17px;color:#8b909c;letter-spacing:0.4px">to</div>
<div class="t" style="left:332.9px;top:325.6px;font-size:17px;color:#474e5f;letter-spacing:0.55px;-webkit-text-stroke:0.3px #474e5f">06/12/2020 10:00</div>

<div class="abs" style="left:20.2px;top:367.2px;width:483.6px;height:105.5px;background:#fff;border-radius:10px"></div>
<div class="abs" style="left:20.5px;top:493.2px;width:483.3px;height:225.1px;background:#fff;border-radius:10px"></div>
<svg class="abs" style="left:0;top:300px" width="525" height="450" viewBox="108 441 525 450">
<circle cx="160.5" cy="540" r="10.3" fill="none" stroke="#363f5c" stroke-width="1.7"/>
<path d="M155.4 537.8l5.1 5l5.1-5" fill="none" stroke="#363f5c" stroke-width="1.8"/>
<circle cx="188.1" cy="577.4" r="3.7" fill="#747b8c"/>
<circle cx="160.2" cy="665.9" r="10.3" fill="none" stroke="#363f5c" stroke-width="1.7"/>
<path d="M155.1 663.7l5.1 5l5.1-5" fill="none" stroke="#363f5c" stroke-width="1.8"/>
<circle cx="193.5" cy="703.2" r="10.3" fill="none" stroke="#363f5c" stroke-width="1.7"/>
<path d="M188.4 701l5.1 5l5.1-5" fill="none" stroke="#363f5c" stroke-width="1.8"/>
<circle cx="221.2" cy="740.5" r="3.7" fill="#747b8c"/>
<circle cx="221.2" cy="782.1" r="3.7" fill="#747b8c"/>
<circle cx="221.2" cy="823.7" r="3.7" fill="#747b8c"/>
</svg>
<div class="t" style="left:73.3px;top:390.8px;font-size:17px;color:#4a5064;letter-spacing:0.6px">Clinc Construction</div>
<div class="t" style="left:95.5px;top:427.7px;font-size:17px;color:#8c91a0;letter-spacing:0.23px">Site Work &amp; Logistics</div>
<div class="t" style="left:72.5px;top:516.6px;font-size:17px;color:#4a5064;letter-spacing:0.65px">Superstructure</div>
<div class="t" style="left:106px;top:553.7px;font-size:17px;color:#4a5064;">GF</div>
<div class="t" style="left:128.8px;top:590.8px;font-size:17px;color:#8c91a0;letter-spacing:0.2px">Zone 3</div>
<div class="t" style="left:128.8px;top:632.4px;font-size:17px;color:#8c91a0;letter-spacing:0.2px">Zone 4</div>
<div class="t" style="left:128.8px;top:674px;font-size:17px;color:#8c91a0;letter-spacing:0.2px">Zone 5</div>
</div>

<!-- toolbar -->
<div class="abs tb"></div>
<div class="abs tbd" style="box-shadow:1px 0 0 0 #43547a"></div>
<svg class="abs" style="left:629px;top:1237px" width="544" height="67" viewBox="629 1237 544 67">
<g fill="none" stroke="#dfe4ee" stroke-width="1.9" stroke-linejoin="round" stroke-linecap="round">
<path d="M658.9 1268.5L670.8 1260.5L682.8 1268.5"/>
<path d="M661 1271V1281.3H666V1274.2Q666 1270.7 670.8 1270.7Q675.7 1270.7 675.7 1274.2V1281.3H681V1271"/>
<path d="M714.2 1265.8H733.7V1283.1H714.2Z" fill="#6b7896"/>
<path d="M714.2 1265.8L728 1260.2H737.7V1276.9L733.7 1283.1M733.7 1265.8L737.7 1260.2"/>
<path d="M717.3 1280L730.2 1266.3" stroke-dasharray="2.6 2.2" stroke-width="1.6"/>
<ellipse cx="781.1" cy="1271.1" rx="4.9" ry="12"/>
<ellipse cx="781.3" cy="1271.3" rx="11.2" ry="4.4"/>
<path d="M825.2 1266.2V1259.2H832.2M841.2 1259.2H848.2V1266.2M848.2 1274.8V1281.8H841.2M832.2 1281.8H825.2V1274.8" stroke-width="2"/>
<path d="M881 1271.5L886.3 1262.5H898.5L903.5 1266.5L899 1271.5Z"/>
<path d="M887 1271V1266H896V1271"/>
<path d="M884.5 1275.5H886.5M897 1275.5H899.5M884.5 1279.5H891.5M894 1279.5H896" stroke-width="1.5"/>
<circle cx="947.1" cy="1271.1" r="8.6" stroke-width="1.9"/>
<path d="M947.1 1258.6V1262.4M947.1 1279.8V1283.6M934.6 1271.1H938.4M955.8 1271.1H959.6" stroke-width="1.7"/>
<circle cx="1002.7" cy="1271.1" r="11.6" stroke-width="1.6"/>
<path d="M1002.7 1269V1277.8" stroke-width="1.6"/>
<path d="M1066.5 1273.5Q1066.5 1267 1074.5 1259.5Q1082.5 1267 1082.5 1273.5Q1082.5 1283.5 1074.5 1283.5Q1066.5 1283.5 1066.5 1273.5Z" stroke-width="1.8"/>
</g>
<path d="M737.3 1252.5H746.1V1259.6Z M792.6 1252.2H801V1259.6Z M904 1252H912.4V1259.6Z" fill="#7583a0"/>
<path d="M835.5 1263.6l6.5 3.4v8l-6.5 3.6l-6.5-3.6v-8z" fill="#e4e8ec"/>
<circle cx="836.7" cy="1266" r="1.6" fill="#1b2a50"/>
<circle cx="947.1" cy="1271.1" r="3.8" fill="#e6eaf2"/>
<circle cx="1002.7" cy="1266" r="1.1" fill="#dfe4ee"/>
<path d="M1074.5 1259.5Q1082.5 1267 1082.5 1273.5Q1082.5 1283.5 1074.5 1283.5Z" fill="#dfe4ee"/>
<path d="M1063 1259.5L1085.5 1283.4" stroke="#304166" stroke-width="3.6"/>
<path d="M1063 1259.5L1085.5 1283.4" stroke="#dfe4ee" stroke-width="1.7"/>
<rect x="1101.1" y="1243.5" width="3" height="54.8" fill="#7d8aa6"/>
<path d="M1119 1271.4Q1131 1258 1143 1271.4Q1131 1284.8 1119 1271.4Z" fill="#e4e8f0"/>
<circle cx="1131" cy="1271.2" r="3.6" fill="none" stroke="#304166" stroke-width="2"/>
</svg>

</div></div>
</body></html>
